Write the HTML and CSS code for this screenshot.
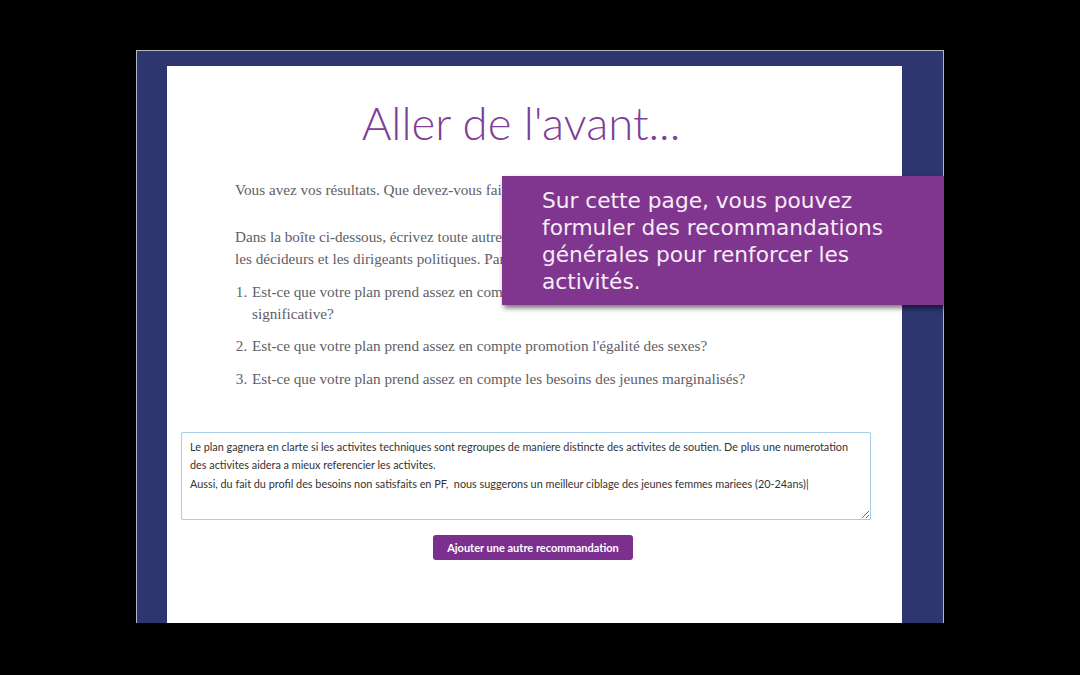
FILE: index.html
```html
<!DOCTYPE html>
<html lang="fr">
<head>
<meta charset="utf-8">
<link rel="stylesheet" href="styles.css">
</head>
<body>
<div class="stage">
  <div class="frame">
    <div class="page">
      <h1 class="title">Aller de l'avant...</h1>
      <div class="content">
        <p class="para para-lead">Vous avez vos résultats. Que devez-vous faire ensuite?</p>
        <p class="para">Dans la boîte ci-dessous, écrivez toute autre recommandation que vous voulez faire pour les décideurs et les dirigeants politiques. Par exemple:</p>
        <ol class="questions">
          <li>Est-ce que votre plan prend assez en compte la participation des jeunes de manière significative?</li>
          <li>Est-ce que votre plan prend assez en compte promotion l'égalité des sexes?</li>
          <li>Est-ce que votre plan prend assez en compte les besoins des jeunes marginalisés?</li>
        </ol>
      </div>
      <textarea class="reco">Le plan gagnera en clarte si les activites techniques sont regroupes de maniere distincte des activites de soutien. De plus une numerotation
des activites aidera a mieux referencier les activites.
Aussi, du fait du profil des besoins non satisfaits en PF,  nous suggerons un meilleur ciblage des jeunes femmes mariees (20-24ans)|</textarea>
      <div class="actions">
        <button class="add-btn">Ajouter une autre recommandation</button>
      </div>
    </div>
  </div>
</div>
<div class="callout">Sur cette page, vous pouvez formuler des recommandations générales pour renforcer les activités.</div>
</body>
</html>
```
FILE: styles.css
```css
html, body {
  margin: 0;
  padding: 0;
  background: #000;
  width: 1080px;
  height: 675px;
  overflow: hidden;
}
.stage {
  height: 573px;
  padding: 50px 0 0 136px;
  overflow: hidden;
}
.frame {
  width: 808px;
  height: 600px;
  background: #2e3670;
  border: 1px solid #b4b6c4;
  border-bottom: none;
  padding: 15px 41px 0 30px;
  box-sizing: border-box;
}
.page {
  background: #fff;
  height: 620px;
  padding-top: 30px;
  box-sizing: border-box;
}
.title {
  margin: 0;
  font-family: Lato, sans-serif;
  font-weight: 300;
  font-size: 45.5px;
  line-height: 1.2;
  color: #7e3f98;
  text-align: center;
  padding-right: 27px;
}
.content {
  width: 550px;
  margin: 28px 0 0 68px;
  font-family: "Liberation Serif", serif;
  font-size: 15.2px;
  line-height: 22px;
  color: #606066;
}
.para {
  margin: 0 0 11px 0;
}
.para-lead {
  margin-bottom: 25px;
}
.questions {
  margin: 0;
  padding-left: 16px;
}
.questions li {
  margin-bottom: 10.5px;
  padding-left: 1px;
}
.reco {
  display: block;
  margin: 42px 0 0 14px;
  width: 690px;
  height: 88px;
  box-sizing: border-box;
  border: 1px solid #a6cbe6;
  border-radius: 2px;
  padding: 5px 8px;
  font-family: Lato, sans-serif;
  font-size: 10.85px;
  line-height: 18.5px;
  color: #333;
  resize: both;
  white-space: pre-wrap;
  overflow: hidden;
}
.actions {
  display: flex;
  justify-content: center;
  margin-top: 15px;
  padding-right: 3px;
}
.add-btn {
  width: 200px;
  height: 25px;
  border: none;
  border-radius: 3px;
  background: #7b2f8e;
  color: #fff;
  font-family: Lato, sans-serif;
  font-weight: 700;
  font-size: 11px;
  padding: 0;
}
.callout {
  position: absolute;
  left: 502px;
  top: 176px;
  width: 442px;
  height: 129px;
  box-sizing: border-box;
  padding: 11px 30px 0 40px;
  background: #80358f;
  box-shadow: 2px 3px 5px rgba(0,0,0,0.55);
  color: #f7ecf7;
  font-family: "DejaVu Sans", sans-serif;
  font-size: 21.7px;
  line-height: 27px;
}
```
